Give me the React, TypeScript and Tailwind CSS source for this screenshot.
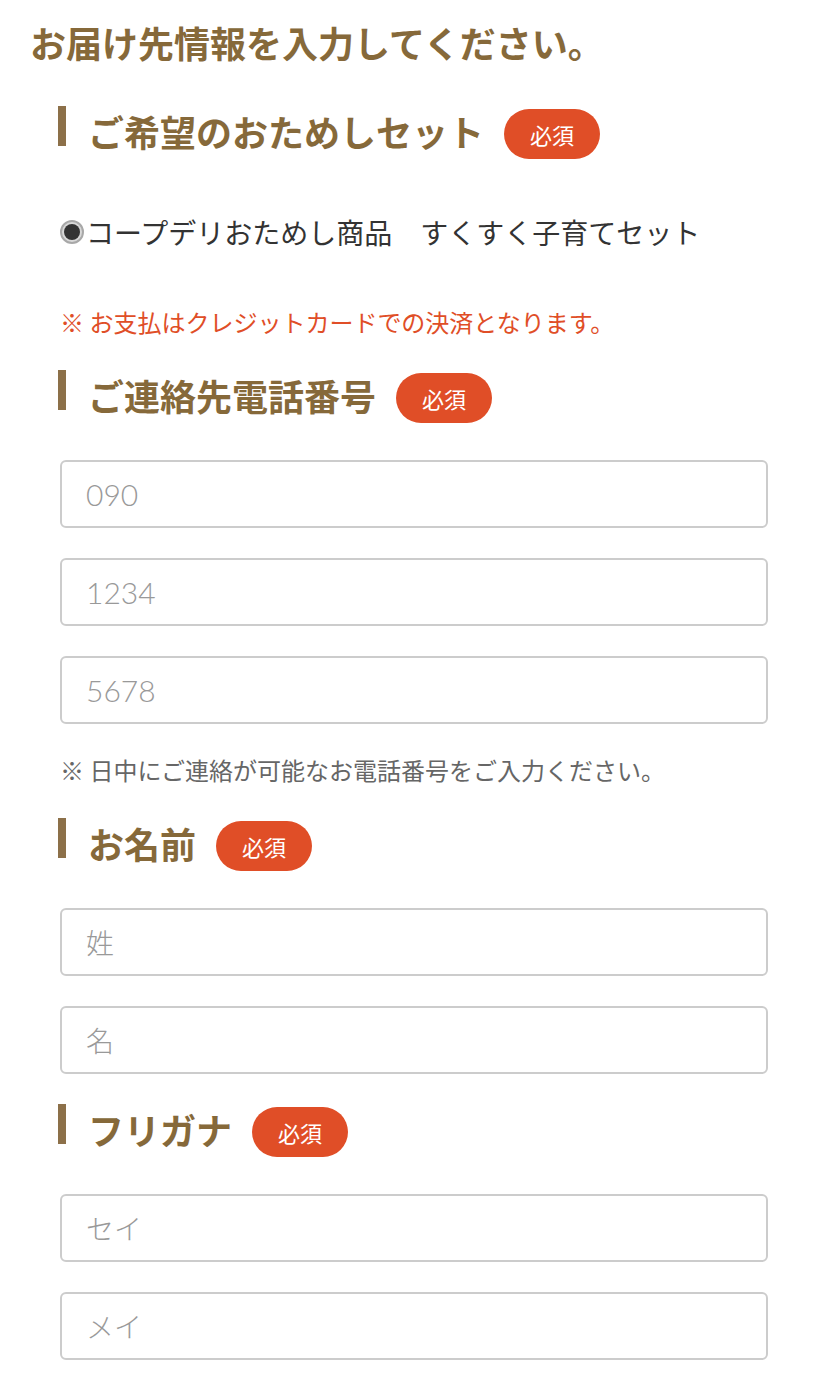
const jp = { fontFamily: '"Noto Sans CJK JP", "Noto Sans", sans-serif' };
const num = { fontFamily: 'Lato, "Noto Sans CJK JP", sans-serif' };

function SectionHeading({ title }: { title: string }) {
	return (
		<div className="flex h-[50px] items-center">
			<span className="-ml-[2px] mb-4 h-10 w-2 shrink-0 bg-[#8c7049]" />
			<h2 className="mb-[6px] ml-[22px] text-[36px] leading-[44px] font-bold text-[#86693a]">{title}</h2>
			<span className="ml-[20px] flex h-[50px] w-[96px] items-center justify-center rounded-full bg-[#e04e27] text-[22px] text-white">
				必須
			</span>
		</div>
	);
}

function TextField({ placeholder, numeric = false }: { placeholder: string; numeric?: boolean }) {
	return (
		<input
			type="text"
			placeholder={placeholder}
			className={`block h-[68px] w-full rounded-[6px] border-2 border-[#cccccc] bg-white px-6 font-light text-[#333] placeholder:text-[#999] outline-none ${numeric ? 'text-[30px]' : 'text-[28px]'}`}
			style={numeric ? num : jp}
		/>
	);
}

export default function App() {
	return (
		<div className="min-h-[1374px] bg-white px-[60px] pt-4" style={jp}>
			<h1 className="-ml-[30px] text-[36px] leading-[52px] font-bold text-[#86693a]">
				お届け先情報を入力してください。
			</h1>

			<div className="mt-[41px]">
				<SectionHeading title="ご希望のおためしセット" />
			</div>
			<label className="mt-[53px] flex h-10 items-center text-[28px] text-[#333]">
				<span className="flex h-6 w-6 shrink-0 items-center justify-center rounded-full border-2 border-[#a8a8a8] bg-[#d8d8d8]">
					<span className="h-4 w-4 rounded-full bg-[#333]" />
				</span>
				<span className="ml-[2px]">コープデリおためし商品　すくすく子育てセット</span>
			</label>
			<p className="mt-[52px] text-[24px] leading-9 text-[#e04e27]">※ お支払はクレジットカードでの決済となります。</p>

			<div className="mt-[33px]">
				<SectionHeading title="ご連絡先電話番号" />
			</div>
			<div className="mt-[37px] flex flex-col gap-[30px]">
				<TextField placeholder="090" numeric />
				<TextField placeholder="1234" numeric />
				<TextField placeholder="5678" numeric />
			</div>
			<p className="mt-[28px] text-[24px] leading-9 text-[#666]">※ 日中にご連絡が可能なお電話番号をご入力ください。</p>

			<div className="mt-[33px]">
				<SectionHeading title="お名前" />
			</div>
			<div className="mt-[37px] flex flex-col gap-[30px]">
				<TextField placeholder="姓" />
				<TextField placeholder="名" />
			</div>

			<div className="mt-[33px]">
				<SectionHeading title="フリガナ" />
			</div>
			<div className="mt-[37px] flex flex-col gap-[30px]">
				<TextField placeholder="セイ" />
				<TextField placeholder="メイ" />
			</div>
		</div>
	);
}
